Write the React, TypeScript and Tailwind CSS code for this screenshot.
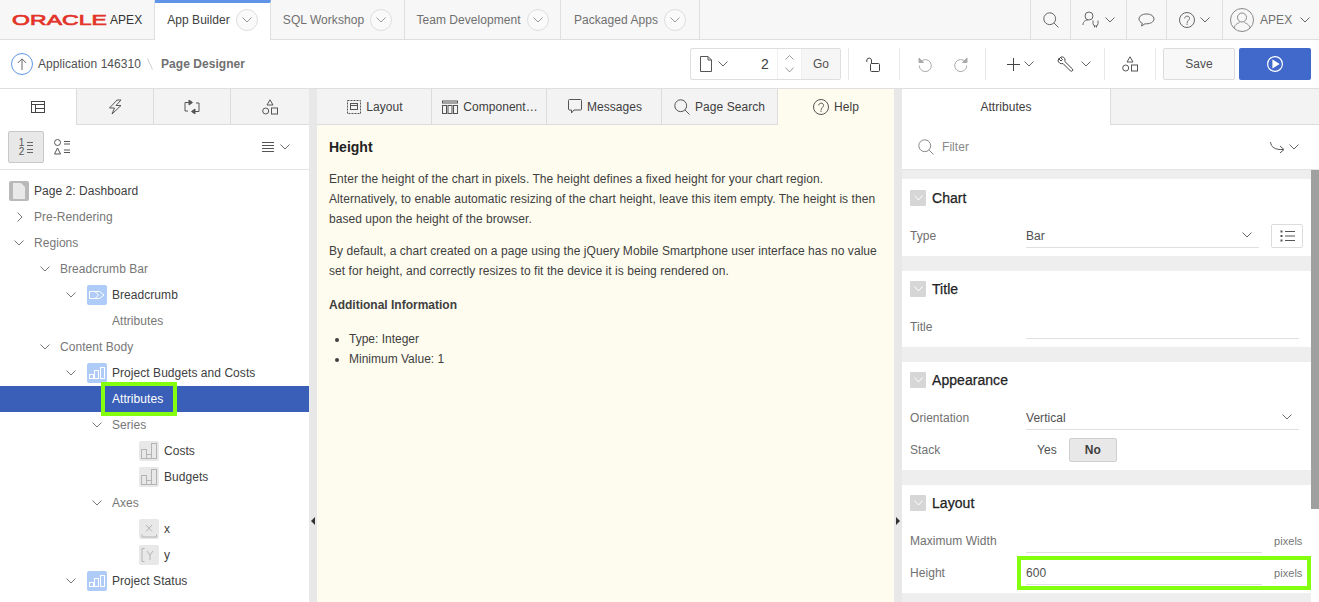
import React from "react";

const S = ({ w, h, children, className = "", stroke = "#555", sw = 1 }: { w: number; h: number; children: React.ReactNode; className?: string; stroke?: string; sw?: number }) => (
  <svg width={w} height={h} viewBox={`0 0 ${w} ${h}`} fill="none" stroke={stroke} strokeWidth={sw} className={`shrink-0 ${className}`}>{children}</svg>
);
const ChevD = ({ c = "#666", w = 10, cls = "" }: { c?: string; w?: number; cls?: string }) => (
  <S w={w} h={6} stroke={c} className={cls}><path d={`M0.5 0.5L${w / 2} 5L${w - 0.5} 0.5`} /></S>
);
const Circ = () => (
  <div className="w-[22px] h-[22px] rounded-full border border-[#dedede] bg-[#fafafa] flex items-center justify-center shrink-0"><ChevD c="#999" w={10} /></div>
);
const Search = ({ c = "#666", z = 16 }: { c?: string; z?: number }) => (
  <S w={z} h={z} stroke={c}><circle cx={z * 0.42} cy={z * 0.42} r={z * 0.37} /><path d={`M${z * 0.68} ${z * 0.68}L${z - 0.5} ${z - 0.5}`} /></S>
);
const Shapes = () => (
  <S w={16} h={16} stroke="#555"><path d="M8 .8L11 6H5z" /><circle cx="3.700" cy="12" r="3" /><rect x="9.500" y="9" width="6" height="6" /></S>
);
const Help = ({ z = 16, c = "#555" }: { z?: number; c?: string }) => (
  <div className="relative shrink-0" style={{ width: z, height: z }}>
    <S w={z} h={z} stroke={c}><circle cx={z / 2} cy={z / 2} r={z / 2 - 0.5} /><path d={`M${z * 0.36} ${z * 0.4}c0-3 ${z * 0.3}-3 ${z * 0.3} 0c0 ${z * 0.12}-${z * 0.15} ${z * 0.12}-${z * 0.15} ${z * 0.28}`} /><path d={`M${z / 2} ${z * 0.72}v1.400`} /></S>
  </div>
);

const TopTab = ({ label, w, active }: { label: string; w: string; active?: boolean }) => (
  <div className={`${w} flex items-center justify-center gap-[6px] border-r border-[#dfdfdf] h-[40px] shrink-0 ${active ? "bg-white border-t-[3px] border-t-[#5f94e8] text-[#404040] -mb-px pb-[3px]" : "text-[#707070]"}`}>
    <span>{label}</span><Circ />
  </div>
);
const TopIcon = ({ w, children }: { w: string; children: React.ReactNode }) => (
  <div className={`${w} h-[39px] border-l border-[#dfdfdf] flex items-center justify-center shrink-0`}>{children}</div>
);
const VLine = ({ cls }: { cls: string }) => <div className={`w-px h-[32px] bg-[#e8e8e8] shrink-0 ${cls}`} />;

const NodeBlue = ({ kind }: { kind: "crumb" | "chart" }) => (
  <div className="w-[20px] h-[20px] rounded-[2px] bg-[#afcbf7] flex items-center justify-center shrink-0">
    {kind === "crumb" ? (
      <S w={16} h={8} stroke="#fff"><path d="M.5.5H10.500L15 4L10.500 7.500H.5z" /><path d="M6 .5L9.500 4L6 7.500" /></S>
    ) : (
      <S w={20} h={20} stroke="#fff"><rect x="2.500" y="11.500" width="4" height="4" /><rect x="7.500" y="7.500" width="4" height="8" /><rect x="13.500" y="4.500" width="4" height="11" /></S>
    )}
  </div>
);
const NodeGray = ({ kind }: { kind: "bars" | "x" | "y" | "page" }) => (
  <div className={`w-[20px] h-[20px] rounded-[2px] flex items-center justify-center shrink-0 ${kind === "page" ? "bg-[#b9b9b9]" : "bg-[#e8e8e8]"}`}>
    {kind === "page" && <svg width="12" height="16" viewBox="0 0 12 16" fill="#e9e9e9"><path d="M0 0H8L12 4V16H0z" /></svg>}
    {kind === "bars" && <S w={20} h={20} stroke="#b4b4b4"><rect x="2.500" y="8.500" width="5" height="9" /><rect x="7.500" y="13.500" width="5" height="4" /><rect x="12.500" y="2.500" width="5" height="15" /></S>}
    {kind === "x" && <S w={20} h={20} stroke="#b4b4b4"><path d="M7 6L13 12.500M13 6L7 12.500" /><path d="M3 15.500v2.500H17.500v-2.500" /></S>}
    {kind === "y" && <S w={20} h={20} stroke="#b4b4b4"><path d="M5.500 3.500H3V16.500H5.500" /><path d="M8 6L11 10L14 6M11 10V15" /></S>}
  </div>
);

type R = { t: string; pl: number; chev?: "r" | "d"; icon?: React.ReactNode; dark?: boolean; sel?: boolean };
const rows: R[] = [
  { t: "Page 2: Dashboard", pl: 9, icon: <NodeGray kind="page" />, dark: true },
  { t: "Pre-Rendering", pl: 14, chev: "r" },
  { t: "Regions", pl: 14, chev: "d" },
  { t: "Breadcrumb Bar", pl: 40, chev: "d" },
  { t: "Breadcrumb", pl: 66, chev: "d", icon: <NodeBlue kind="crumb" />, dark: true },
  { t: "Attributes", pl: 112 },
  { t: "Content Body", pl: 40, chev: "d" },
  { t: "Project Budgets and Costs", pl: 66, chev: "d", icon: <NodeBlue kind="chart" />, dark: true },
  { t: "Attributes", pl: 112, sel: true },
  { t: "Series", pl: 92, chev: "d" },
  { t: "Costs", pl: 139, icon: <NodeGray kind="bars" />, dark: true },
  { t: "Budgets", pl: 139, icon: <NodeGray kind="bars" />, dark: true },
  { t: "Axes", pl: 92, chev: "d" },
  { t: "x", pl: 139, icon: <NodeGray kind="x" />, dark: true },
  { t: "y", pl: 139, icon: <NodeGray kind="y" />, dark: true },
  { t: "Project Status", pl: 66, chev: "d", icon: <NodeBlue kind="chart" />, dark: true },
];

const TreeRow = ({ r }: { r: R }) => (
  <div className={`h-[26px] flex items-center shrink-0 ${r.sel ? "bg-[#3a5fb8] text-white" : r.dark ? "text-[#404040]" : "text-[#777]"}`} style={{ paddingLeft: r.pl }}>
    {r.chev === "d" && <ChevD c="#777" cls={r.icon ? "mr-[11px]" : "mr-[10px]"} />}
    {r.chev === "r" && <S w={6} h={10} stroke="#777" className="ml-[3px] mr-[11px]"><path d="M.5.5L5 5L.5 9.500" /></S>}
    {r.icon && <span className="mr-[5px]">{r.icon}</span>}
    <span className="-mt-px">{r.t}</span>
  </div>
);

const LeftTab = ({ w, active, children }: { w: string; active?: boolean; children: React.ReactNode }) => (
  <div className={`${w} h-[36px] flex items-center justify-center shrink-0 border-r border-[#dcdcdc] ${active ? "bg-white" : "bg-[#f3f3f3] border-b"}`}>{children}</div>
);
const CTab = ({ w, icon, label, active, pad }: { w: string; icon: React.ReactNode; label: string; active?: boolean; pad?: boolean }) => (
  <div className={`${w} h-[36px] flex items-center justify-center gap-[5px] shrink-0 text-[#404040] ${pad ? "pl-[2px]" : ""} ${active ? "bg-[#fefcef]" : "bg-[#f3f3f3] border-r border-b border-[#dcdcdc]"}`}>{icon}<span>{label}</span></div>
);

const SecHead = ({ t, first }: { t: string; first?: boolean }) => (
  <div className={`flex items-start pl-[8px] shrink-0 ${first ? "h-[39px] pt-[11px]" : "h-[38px] pt-[10px]"}`}>
    <div className="w-[16px] h-[16px] rounded-[1px] bg-[#d6d6d6] flex items-center justify-center"><ChevD c="#fff" w={9} /></div>
    <span className="ml-[6px] text-[14px] leading-[16px] text-[#222] [-webkit-text-stroke:0.25px_#222]">{t}</span>
  </div>
);
const Field = ({ label, value, chev, lineW = "w-[273px]", right }: { label: string; value?: string; chev?: boolean; lineW?: string; right?: React.ReactNode }) => (
  <div className="h-[32px] flex items-center pl-[8px] shrink-0">
    <span className="w-[116px] text-[#707070] -mt-px">{label}</span>
    <div className={`${lineW} h-[24px] border-b border-[#e0e0e0] flex items-center justify-between text-[#505050] mt-[-1px]`}>
      <span className="pt-[2px]">{value}</span>
      {chev && <ChevD c="#666" cls="mr-[7px]" />}
    </div>
    {right}
  </div>
);
const Gap = ({ h }: { h: string }) => <div className={`${h} bg-[#eeeeee] shrink-0`} />;

export default function App() {
  return (
    <div className="relative w-[1319px] h-[602px] overflow-hidden bg-white text-[12px] leading-[16px] tracking-[0.05px] text-[#404040] font-['Liberation_Sans',Arial,sans-serif] flex flex-col">
      {/* Top nav */}
      <div className="h-[40px] bg-[#f7f7f7] border-b border-[#dfdfdf] flex shrink-0">
        <div className="w-[155px] border-r border-[#dfdfdf] flex items-center pl-[12px] gap-[2px] shrink-0">
          <svg width="96" height="16" viewBox="0 0 96 16"><text x="0" y="13" textLength="95" lengthAdjust="spacingAndGlyphs" fontSize="15" fontWeight="400" stroke="#e3342a" strokeWidth="0.7" fill="#e3342a" fontFamily="Liberation Sans">ORACLE</text></svg>
          <span className="text-[#333] text-[12px]">APEX</span>
        </div>
        <TopTab label="App Builder" w="w-[116px]" active />
        <TopTab label="SQL Workshop" w="w-[134px]" />
        <TopTab label="Team Development" w="w-[156px]" />
        <TopTab label="Packaged Apps" w="w-[139px]" />
        <div className="flex-1" />
        <TopIcon w="w-[40px]"><Search c="#666" /></TopIcon>
        <TopIcon w="w-[56px]">
          <S w={18} h={17} stroke="#666"><circle cx="7" cy="5" r="4" /><path d="M1 14c0-4 3-5 5-5" /><path d="M11 9.500v3a2.500 2.500 0 005 0v-3M12.500 15v1.500M14.500 15v1.500" /></S>
          <ChevD cls="ml-[5px]" />
        </TopIcon>
        <TopIcon w="w-[40px]">
          <S w={17} h={14} stroke="#666"><path d="M8.500 1C4 1 1 3.200 1 6c0 2 1.500 3.500 3.300 4.200L3.500 13l3.500-2.200h1.500c4 0 7.500-2 7.500-4.800S13 1 8.500 1z" /></S>
        </TopIcon>
        <TopIcon w="w-[56px]"><Help c="#666" /><ChevD cls="ml-[5px]" /></TopIcon>
        <div className="w-[97px] h-[39px] border-l border-[#dfdfdf] flex items-center pl-[7px] shrink-0 text-[#707070]">
          <S w={24} h={24} stroke="#888"><circle cx="12" cy="12" r="11.500" /><circle cx="12" cy="9.500" r="4.500" /><path d="M4 20c1-4 4-4.500 5.500-5.500M20 20c-1-4-4-4.500-5.500-5.500" /></S>
          <span className="ml-[6px]">APEX</span>
          <ChevD cls="ml-[8px]" />
        </div>
      </div>

      {/* Toolbar */}
      <div className="h-[49px] bg-white border-b border-[#dfdfdf] flex items-center shrink-0">
        <div className="w-[22px] h-[22px] ml-[11px] rounded-full border border-[#5f94e8] flex items-center justify-center shrink-0">
          <S w={10} h={12} stroke="#666"><path d="M5 12V1M.8 5L5 .8L9.200 5" /></S>
        </div>
        <span className="ml-[5px] text-[#505050]">Application 146310</span>
        <S w={6} h={12} stroke="#ccc" className="ml-[6px]"><path d="M.5.5L5.500 11.500" /></S>
        <span className="ml-[8px] font-bold text-[#707070]">Page Designer</span>
        <div className="flex-1" />
        <div className="w-[151px] h-[32px] border border-[#dedede] rounded-[2px] flex items-center shrink-0">
          <S w={12} h={16} stroke="#555" className="ml-[9px]"><path d="M.5.5H8L11.500 4V15.500H.5zM8 .5V4H11.500" /></S>
          <ChevD cls="ml-[6px]" />
          <span className="ml-[33px] w-[10px] text-[14px] text-[#404040]">2</span>
          <div className="ml-[6px] w-[25px] h-full border-x border-[#eee] flex flex-col items-center justify-center gap-[7px]">
            <S w={9} h={5} stroke="#999"><path d="M.5 4.500L4.500.5L8.500 4.500" /></S>
            <ChevD c="#999" w={9} />
          </div>
          <div className="flex-1 h-full bg-[#f6f6f6] flex items-center justify-center text-[#505050]">Go</div>
        </div>
        <VLine cls="ml-[7px]" />
        <S w={15} h={15} stroke="#444" className="ml-[17px]"><rect x="4.500" y="6.500" width="9" height="8" rx="1" /><path d="M.8 5V3A2.400 2.400 0 015.500 3V6.500" /></S>
        <VLine cls="ml-[18px]" />
        <S w={15} h={15} stroke="#aaa" className="ml-[18px]"><path d="M2.500 5A6 6 0 111.300 8.500" /><path d="M1 1v4.500h4.500z" fill="#aaa" /></S>
        <S w={15} h={15} stroke="#aaa" className="ml-[20px]"><path d="M12.500 5A6 6 0 1013.700 8.500" /><path d="M14 1v4.500H9.500z" fill="#aaa" /></S>
        <VLine cls="ml-[17px]" />
        <S w={13} h={13} stroke="#444" className="ml-[21px]"><path d="M6.500 0V13M0 6.500H13" /></S>
        <ChevD cls="ml-[4px]" />
        <S w={17} h={17} stroke="#444" className="ml-[23px]"><path d="M1 4L4 1c2-.5 4 .5 4 3 0 .5 0 1-.2 1.500L15.500 13c1 1.200-.8 3-2 2L6 7.500C4 8.300 1 7 1 4z" /><path d="M1.500 2.500L4 5l1.500-1.500L3 1" /></S>
        <ChevD cls="ml-[7px]" />
        <VLine cls="ml-[13px]" />
        <div className="ml-[17px]"><Shapes /></div>
        <VLine cls="ml-[17px]" />
        <div className="ml-[7px] w-[72px] h-[32px] border border-[#dcdcdc] rounded-[2px] bg-[#f8f8f8] flex items-center justify-center text-[#505050] shrink-0">Save</div>
        <div className="ml-[4px] w-[72px] h-[32px] rounded-[2px] bg-[#4169cb] flex items-center justify-center shrink-0">
          <S w={16} h={16} stroke="#fff" sw={1.2}><circle cx="8" cy="8" r="7.400" /><path d="M6 4.500L11.500 8L6 11.500z" fill="#fff" /></S>
        </div>
        <div className="w-[8px] shrink-0" />
      </div>

      {/* Panels */}
      <div className="flex-1 flex min-h-0 bg-[#e8e8e8]">
        {/* Left */}
        <div className="w-[309px] bg-white flex flex-col shrink-0 min-h-0">
          <div className="flex h-[36px] shrink-0">
            <LeftTab w="w-[77px]" active>
              <S w={14} h={12} stroke="#444"><rect x=".5" y=".5" width="13" height="11" /><path d="M.5 3.500H13.500M4.500 3.500V11.500M4.500 7.500H13.500" /></S>
            </LeftTab>
            <LeftTab w="w-[77px]">
              <S w={14} h={16} stroke="#555"><path d="M9 1H13L8 6.500H13L4 15L6.500 9H1.500z" /></S>
            </LeftTab>
            <LeftTab w="w-[77px]">
              <S w={16} h={14} stroke="#555"><path d="M6 2.500H1V11H4M10 11.500H15V3H12" /><path d="M5 0L8.500 2.500L5 5zM11 9L7.500 11.500L11 14z" fill="#555" /></S>
            </LeftTab>
            <div className="flex-1 h-[36px] bg-[#f3f3f3] border-b border-[#dcdcdc] flex items-center justify-center"><Shapes /></div>
          </div>
          <div className="h-[45px] border-b border-[#e4e4e4] flex items-center pl-[8px] shrink-0">
            <div className="w-[36px] h-[32px] bg-[#e8e8e8] border border-[#c8c8c8] rounded-[2px] flex items-center justify-center gap-[3px] text-[#555] text-[10px] leading-[9px]">
              <span className="flex flex-col"><span>1</span><span>2</span></span>
              <S w={6} h={16} stroke="#666"><path d="M0 3.500H6M0 6.500H6M0 10.500H6M0 13.500H6" /></S>
            </div>
            <S w={17} h={16} stroke="#555" className="ml-[10px]"><circle cx="3.500" cy="3.500" r="3" /><path d="M3.500 9L.5 15H6.500z" /><path d="M10 2.500H16M10 5H16M10 11H16M10 13.500H16" /></S>
            <div className="flex-1" />
            <S w={12} h={11} stroke="#555"><path d="M0 .5H12M0 3.500H12M0 6.500H12M0 9.500H12" /></S>
            <ChevD cls="ml-[6px] mr-[19px]" />
          </div>
          <div className="flex-1 min-h-0 overflow-hidden pt-[8px] flex flex-col">
            {rows.map((r, i) => <TreeRow key={i} r={r} />)}
          </div>
        </div>

        {/* Gutter */}
        <div className="w-[8px] shrink-0 relative">
          <div className="absolute left-[2px] top-[428px] w-0 h-0 border-y-[4px] border-y-transparent border-r-[4px] border-r-[#333]" />
        </div>

        {/* Center */}
        <div className="w-[577px] bg-[#fefcef] flex flex-col shrink-0 min-h-0">
          <div className="flex h-[36px] shrink-0">
            <CTab w="w-[115px]" pad label="Layout" icon={<S w={14} h={14} stroke="#555"><rect x=".5" y=".5" width="13" height="13" strokeDasharray="2 1" /><rect x="3.500" y="3.500" width="7" height="6" /><path d="M3.500 5.500H10.500" /></S>} />
            <CTab w="w-[115px]" pad label="Component…" icon={<S w={16} h={14} stroke="#555"><rect x=".5" y="1" width="15" height="2" /><rect x=".5" y="5.500" width="4" height="8" /><rect x="6" y="5.500" width="4" height="8" /><rect x="11.500" y="5.500" width="4" height="8" /></S>} />
            <CTab w="w-[115px]" pad label="Messages" icon={<S w={14} h={15} stroke="#555"><path d="M1.500.5H12.500A1 1 0 0113.500 1.500V10A1 1 0 0112.500 11H6L3.500 14V11H1.500A1 1 0 01.5 10V1.500A1 1 0 011.500.5z" /></S>} />
            <CTab w="w-[116px]" label="Page Search" icon={<Search c="#555" />} />
            <CTab w="w-[116px]" label="Help" active icon={<Help />} />
          </div>
          <div className="px-[12px] pt-[12px] text-[#404040] leading-[20px] tracking-normal">
            <h3 className="text-[14px] leading-[20px] font-bold text-[#222] mb-[12px]">Height</h3>
            <p className="w-[550px] mb-[12px] tracking-[0.055px]">Enter the height of the chart in pixels. The height defines a fixed height for your chart region. Alternatively, to enable automatic resizing of the chart height, leave this item empty. The height is then based upon the height of the browser.</p>
            <p className="w-[550px] mb-[14px] tracking-[0.055px]">By default, a chart created on a page using the jQuery Mobile Smartphone user interface has no value set for height, and correctly resizes to fit the device it is being rendered on.</p>
            <p className="font-bold mb-[14px]">Additional Information</p>
            <ul className="list-disc pl-[20px]">
              <li>Type: Integer</li>
              <li>Minimum Value: 1</li>
            </ul>
          </div>
        </div>

        {/* Gutter */}
        <div className="w-[8px] shrink-0 relative">
          <div className="absolute left-[2px] top-[428px] w-0 h-0 border-y-[4px] border-y-transparent border-l-[4px] border-l-[#333]" />
        </div>

        {/* Right */}
        <div className="flex-1 bg-white flex flex-col min-w-0 relative overflow-hidden">
          <div className="flex h-[36px] shrink-0">
            <div className="w-[209px] bg-white border-r border-[#dcdcdc] flex items-center justify-center text-[#404040]">Attributes</div>
            <div className="flex-1 bg-[#f3f3f3] border-b border-[#dcdcdc]" />
          </div>
          <div className="h-[45px] border-b border-[#e4e4e4] flex items-center pl-[16px] shrink-0">
            <Search c="#888" />
            <span className="ml-[8px] text-[#888]">Filter</span>
            <div className="flex-1" />
            <S w={15} h={13} stroke="#555"><path d="M.5 1C1 6 5 9 13 8.500" /><path d="M10 5L14 8.500L10 12" /></S>
            <ChevD cls="ml-[4px] mr-[20px]" />
          </div>
          <div className="mr-[8px] flex flex-col">
            <Gap h="h-[9px]" />
            <SecHead t="Chart" first />
            <div className="h-[38px] shrink-0 pt-[2px]">
              <Field label="Type" value="Bar" chev lineW="w-[233px]" right={
                <div className="ml-[12px] w-[32px] h-[24px] border border-[#dcdcdc] rounded-[2px] flex items-center justify-center">
                  <S w={15} h={12} stroke="#555"><path d="M5 1.500H15M5 6H15M5 10.500H15" /><path d="M1.500 .5v2M1.500 5v2M1.500 9.500v2" strokeWidth="2" /></S>
                </div>} />
            </div>
            <Gap h="h-[15px]" />
            <SecHead t="Title" />
            <div className="h-[38px] shrink-0 pt-[2px]"><Field label="Title" /></div>
            <Gap h="h-[15px]" />
            <SecHead t="Appearance" />
            <div className="h-[70px] shrink-0 pt-[2px] flex flex-col">
              <Field label="Orientation" value="Vertical" chev />
              <div className="h-[32px] flex items-center pl-[8px]">
                <span className="w-[127px] text-[#707070]">Stack</span>
                <span className="text-[#505050]">Yes</span>
                <div className="ml-[12px] w-[48px] h-[24px] bg-[#e8e8e8] border border-[#cfcfcf] rounded-[2px] flex items-center justify-center font-bold text-[#404040]">No</div>
              </div>
            </div>
            <Gap h="h-[15px]" />
            <SecHead t="Layout" />
            <div className="h-[70px] shrink-0 pt-[2px] flex flex-col">
              <Field label="Maximum Width" lineW="w-[236px]" right={<span className="ml-[12px] text-[#777] text-[11px]">pixels</span>} />
              <Field label="Height" value="600" lineW="w-[236px]" right={<span className="ml-[12px] text-[#777] text-[11px]">pixels</span>} />
            </div>
            <Gap h="h-[40px]" />
          </div>
          {/* scrollbar thumb */}
          <div className="absolute right-0 top-[81px] w-[8px] h-[339px] bg-[#a0a0a0]" />
        </div>
      </div>

      {/* Highlights */}
      <div className="absolute left-[101px] top-[382px] w-[76px] h-[34px] border-[4px] border-[#84ff0e]" />
      <div className="absolute left-[1017px] top-[556px] w-[294px] h-[34px] border-[4px] border-[#84ff0e]" />
    </div>
  );
}
